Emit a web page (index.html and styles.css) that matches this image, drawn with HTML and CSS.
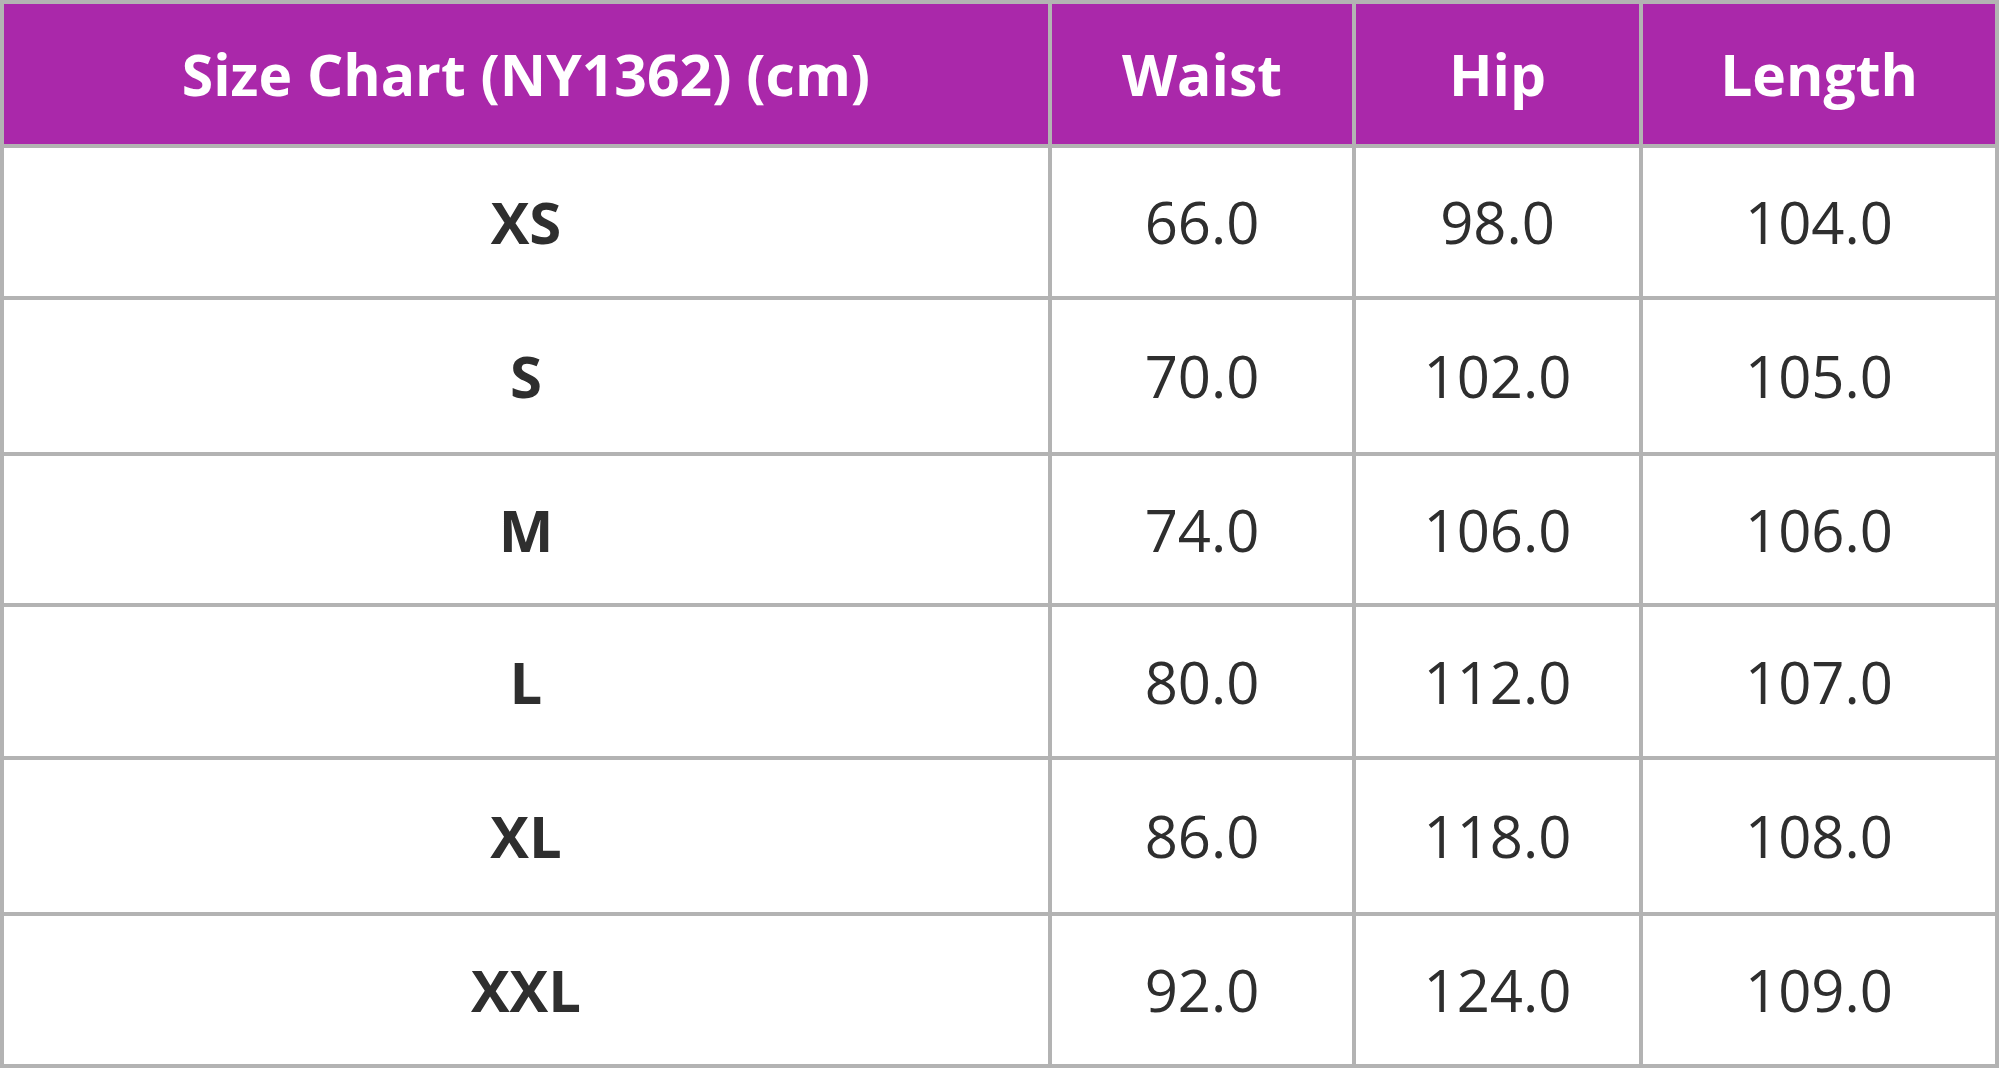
FILE: index.html
```html
<!DOCTYPE html>
<html lang="en">
<head>
<meta charset="utf-8">
<title>Size Chart</title>
<link rel="stylesheet" href="styles.css">
</head>
<body>
<div class="chart">
  <div class="cell head">Size Chart (NY1362) (cm)</div>
  <div class="cell head">Waist</div>
  <div class="cell head">Hip</div>
  <div class="cell head">Length</div>

  <div class="cell size">XS</div>
  <div class="cell">66.0</div>
  <div class="cell">98.0</div>
  <div class="cell">104.0</div>

  <div class="cell size">S</div>
  <div class="cell">70.0</div>
  <div class="cell">102.0</div>
  <div class="cell">105.0</div>

  <div class="cell size">M</div>
  <div class="cell">74.0</div>
  <div class="cell">106.0</div>
  <div class="cell">106.0</div>

  <div class="cell size">L</div>
  <div class="cell">80.0</div>
  <div class="cell">112.0</div>
  <div class="cell">107.0</div>

  <div class="cell size">XL</div>
  <div class="cell">86.0</div>
  <div class="cell">118.0</div>
  <div class="cell">108.0</div>

  <div class="cell size">XXL</div>
  <div class="cell">92.0</div>
  <div class="cell">124.0</div>
  <div class="cell">109.0</div>
</div>
</body>
</html>
```

FILE: styles.css
```css
html, body {
  margin: 0;
  padding: 0;
  background: #ffffff;
}

.chart {
  width: 1999px;
  height: 1068px;
  box-sizing: border-box;
  display: grid;
  grid-template-columns: 1044px 300px 283px 352px;
  grid-template-rows: 140px 148px 152px 147px 149px 152px 148px;
  gap: 4px;
  padding: 4px;
  background: #b3b3b3;
  font-family: "Open Sans", "Noto Sans", sans-serif;
}

.cell {
  background: #ffffff;
  color: #2e2e2e;
  display: flex;
  align-items: center;
  justify-content: center;
  font-size: 58px;
  line-height: 1;
}

.head {
  background: #aa28aa;
  color: #ffffff;
  font-weight: 700;
  font-size: 57px;
}

.size {
  font-weight: 700;
}
```
